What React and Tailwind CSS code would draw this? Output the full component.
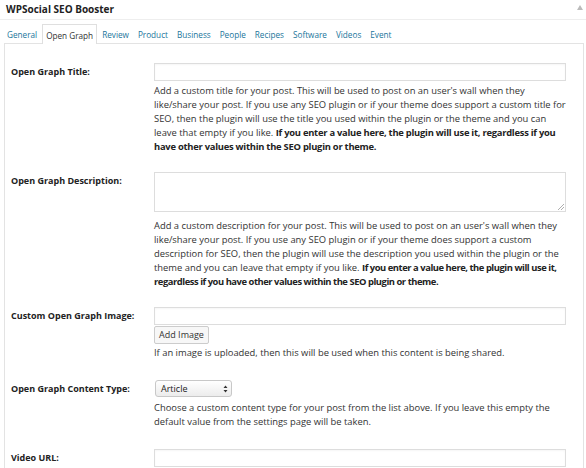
import React from "react";

const tabs = ["General", "Open Graph", "Review", "Product", "Business", "People", "Recipes", "Software", "Videos", "Event"];

function Row({ label, pt, children }) {
  return (
    <div className={`flex ${pt}`}>
      <div className="w-[149px] shrink-0 pl-[6px] pt-[2px] text-[9px] font-bold text-[#222] leading-[14px]">{label}</div>
      <div className="w-[412px]">{children}</div>
    </div>
  );
}

function TextInput() {
  return <div className="h-[18px] w-[412px] border border-[#dddddd] bg-white shadow-[inset_0_1px_2px_rgba(0,0,0,0.04)]" />;
}

export default function App() {
  return (
    <div className="w-[586px] h-[468px] overflow-hidden bg-white text-[9.4px] text-[#333] font-['Open_Sans',sans-serif]">
      {/* header */}
      <div className="flex h-[20px] items-center justify-between border-b border-[#eeeeee] pl-[6px] pr-[3px]">
        <span className="text-[10px] font-bold text-[#222]">WPSocial SEO Booster</span>
        <svg width="6" height="5" viewBox="0 0 6 5" className="mb-[4px]">
          <path d="M3 0 L6 5 L0 5 Z" fill="#bbbbbb" />
        </svg>
      </div>

      {/* tabs */}
      <div className="mt-[4px] flex gap-[1px] pl-[3px] h-[19px] items-stretch text-[8.2px]">
        {tabs.map((t) =>
          t === "Open Graph" ? (
            <div key={t} className="relative z-10 flex items-center border border-b-0 border-[#dfdfdf] bg-white px-[3px] pt-[3px] text-[#333] h-[20px]">
              {t}
            </div>
          ) : (
            <div key={t} className="flex items-center px-[4px] pt-[3px] text-[#21759b]">
              {t}
            </div>
          )
        )}
      </div>

      {/* panel */}
      <div className="ml-[4px] w-[580px] h-[500px] border border-[#e3e3e3] bg-white">
        <Row label="Open Graph Title:" pt="pt-[19px]">
          <TextInput />
          <p className="mt-[3px] leading-[14px]">
            Add a custom title for your post. This will be used to post on an user's wall when they like/share your post. If you use any SEO plugin or if your theme does support a custom title for SEO, then the plugin will use the title you used within the plugin or the theme and you can leave that empty if you like.{" "}
            <b className="font-bold text-[#222] tracking-[-0.25px]">If you enter a value here, the plugin will use it, regardless if you have other values within the SEO plugin or theme.</b>
          </p>
        </Row>

        <Row label="Open Graph Description:" pt="pt-[18px]">
          <div className="relative h-[40px] w-[412px] border border-[#dddddd] bg-white">
            <svg width="6" height="6" viewBox="0 0 6 6" className="absolute bottom-[1px] right-[1px]">
              <path d="M6 0 L0 6 M6 3 L3 6" stroke="#999" strokeWidth="0.8" />
            </svg>
          </div>
          <p className="mt-[7px] leading-[14px]">
            Add a custom description for your post. This will be used to post on an user's wall when they like/share your post. If you use any SEO plugin or if your theme does support a custom description for SEO, then the plugin will use the description you used within the plugin or the theme and you can leave that empty if you like.{" "}
            <b className="font-bold text-[#222] tracking-[-0.45px]">If you enter a value here, the plugin will use it, regardless if you have other values within the SEO plugin or theme.</b>
          </p>
        </Row>

        <Row label="Custom Open Graph Image:" pt="pt-[18px]">
          <TextInput />
          <div className="mt-[1px] flex h-[18px] w-[55px] items-center justify-center rounded-[2px] border border-[#cccccc] bg-[#f7f7f7] text-[9px] text-[#333]">
            Add Image
          </div>
          <p className="mt-[2px] leading-[14px]">If an image is uploaded, then this will be used when this content is being shared.</p>
        </Row>

        <Row label="Open Graph Content Type:" pt="pt-[20px]">
          <div className="ml-[1px] flex h-[17px] w-[77px] items-center justify-between rounded-[3px] border border-[#c8c8c8] bg-gradient-to-b from-white to-[#ececec] pl-[5px] pr-[3px] text-[9px] text-[#222]">
            <span>Article</span>
            <svg width="5" height="8" viewBox="0 0 5 8">
              <path d="M2.5 0.5 L4.5 3 L0.5 3 Z M2.5 7.5 L4.5 5 L0.5 5 Z" fill="#333" />
            </svg>
          </div>
          <p className="mt-[4px] leading-[14px]">
            Choose a custom content type for your post from the list above. If you leave this empty the default value from the settings page will be taken.
          </p>
        </Row>

        <Row label="Video URL:" pt="pt-[20px]">
          <TextInput />
        </Row>
      </div>
    </div>
  );
}
